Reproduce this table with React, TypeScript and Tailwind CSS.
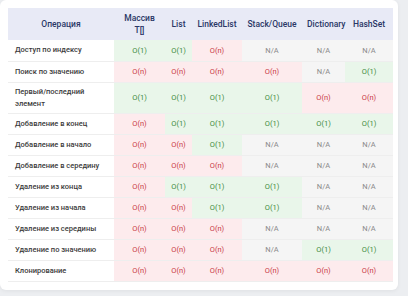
type Cell = 'O(1)' | 'O(n)' | 'N/A'

const columns = ['Массив T[]', 'List', 'LinkedList', 'Stack/Queue', 'Dictionary', 'HashSet']

const rows: { op: string; tall?: boolean; cells: Cell[] }[] = [
    { op: 'Доступ по индексу', cells: ['O(1)', 'O(1)', 'O(n)', 'N/A', 'N/A', 'N/A'] },
    { op: 'Поиск по значению', cells: ['O(n)', 'O(n)', 'O(n)', 'O(n)', 'N/A', 'O(1)'] },
    { op: 'Первый/последний элемент', tall: true, cells: ['O(1)', 'O(1)', 'O(1)', 'O(1)', 'O(n)', 'O(n)'] },
    { op: 'Добавление в конец', cells: ['O(n)', 'O(1)', 'O(1)', 'O(1)', 'O(1)', 'O(1)'] },
    { op: 'Добавление в начало', cells: ['O(n)', 'O(n)', 'O(1)', 'N/A', 'N/A', 'N/A'] },
    { op: 'Добавление в середину', cells: ['O(n)', 'O(n)', 'O(n)', 'N/A', 'N/A', 'N/A'] },
    { op: 'Удаление из конца', cells: ['O(n)', 'O(1)', 'O(1)', 'O(1)', 'N/A', 'N/A'] },
    { op: 'Удаление из начала', cells: ['O(n)', 'O(n)', 'O(1)', 'O(1)', 'N/A', 'N/A'] },
    { op: 'Удаление из середины', cells: ['O(n)', 'O(n)', 'O(n)', 'N/A', 'N/A', 'N/A'] },
    { op: 'Удаление по значению', cells: ['O(n)', 'O(n)', 'O(n)', 'N/A', 'O(1)', 'O(1)'] },
    { op: 'Клонирование', cells: ['O(n)', 'O(n)', 'O(n)', 'O(n)', 'O(n)', 'O(n)'] },
]

const cellStyle: Record<Cell, string> = {
    'O(1)': 'bg-[#e9f6ea] text-[#3d8b40]',
    'O(n)': 'bg-[#fdebed] text-[#c93a45]',
    'N/A': 'bg-[#f5f5f5] text-[#8a8a8a]',
}

export default function App() {
    return (
        <div className="min-h-screen bg-[#eceef1] font-['Roboto',sans-serif]">
            <div className="w-[398px] rounded-md bg-white pt-2 pl-2 pr-[5px] pb-2 shadow-[0_1px_4px_rgba(0,0,0,0.06)]">
                <table className="w-[385px] table-fixed border-collapse">
                    <colgroup>
                        <col className="w-[106px]" />
                        <col className="w-[51px]" />
                        <col className="w-[27px]" />
                        <col className="w-[50px]" />
                        <col className="w-[60px]" />
                        <col className="w-[43px]" />
                        <col className="w-[48px]" />
                    </colgroup>
                    <thead>
                        <tr className="h-[32px] bg-[#e8eaf6] text-[8.5px] leading-[12px] font-medium text-[#2a3766]">
                            <th className="px-1 text-center font-medium">Операция</th>
                            {columns.map((c) => (
                                <th key={c} className="px-[5px] text-center font-medium">
                                    {c}
                                </th>
                            ))}
                        </tr>
                    </thead>
                    <tbody>
                        {rows.map((r) => (
                            <tr
                                key={r.op}
                                className={`${r.tall ? 'h-[31px]' : 'h-[21px]'} border-b border-[#eeeeee]`}
                            >
                                <td className="pl-[7px] pr-2 text-[7.5px] leading-[12px] font-medium text-[#3b3b3b]">
                                    {r.op}
                                </td>
                                {r.cells.map((v, i) => (
                                    <td
                                        key={i}
                                        className={`text-center text-[7.5px] ${cellStyle[v]}`}
                                    >
                                        {v}
                                    </td>
                                ))}
                            </tr>
                        ))}
                    </tbody>
                </table>
            </div>
        </div>
    )
}
